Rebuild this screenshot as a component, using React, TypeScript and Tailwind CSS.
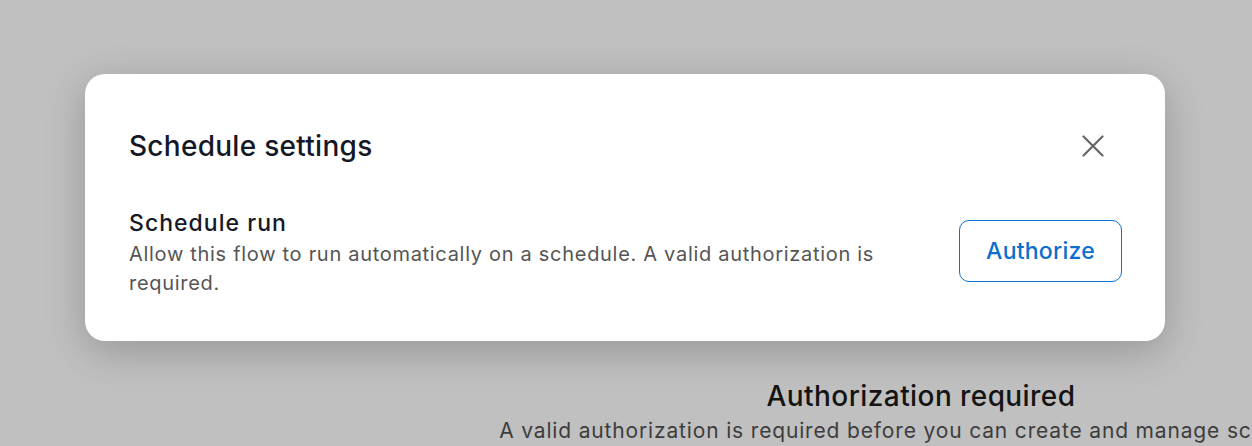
export default function App() {
  return (
    <div
      className="relative h-[446px] w-[1252px] overflow-hidden bg-[#c0c0c0]"
      style={{ fontFamily: "Inter, 'Noto Sans', sans-serif" }}
    >
      {/* page content behind the dialog */}
      <div className="flex w-full justify-center pl-[590px] pt-[377px]">
        <div className="flex w-[846px] shrink-0 flex-col items-center text-center">
          <h2 className="text-[28px] leading-[38px] font-medium tracking-[0.015em] text-[#141414]">
            Authorization required
          </h2>
          <p className="mt-[1px] whitespace-nowrap text-[21px] leading-[30px] tracking-[0.04em] text-[#3d3d3d]">
            A valid authorization is required before you can create and manage schedules.
          </p>
        </div>
      </div>

      {/* dialog */}
      <div className="absolute left-[85px] top-[74px] w-[1080px] rounded-[20px] bg-white pl-[44px] pr-[43px] pt-[54px] pb-[43px] shadow-[0_10px_40px_rgba(0,0,0,0.22)]">
        <div className="flex items-center justify-between">
          <h1 className="text-[28px] leading-[36px] font-medium tracking-[0.01em] text-[#151826]">
            Schedule settings
          </h1>
          <button className="mr-[18px] text-[#666666]">
            <svg width="22" height="22" viewBox="0 0 22 22" fill="none" stroke="currentColor" strokeWidth="2.2" strokeLinecap="round">
              <path d="M1.5 1.5l19 19M20.5 1.5l-19 19" />
            </svg>
          </button>
        </div>

        <div className="mt-[44px] flex items-center justify-between">
          <div className="w-[790px]">
            <div className="text-[23px] leading-[30px] font-medium tracking-[0.045em] text-[#151826]">Schedule run</div>
            <p className="mt-[2px] text-[20px] leading-[29px] tracking-[0.035em] text-[#555555]">
              Allow this flow to run automatically on a schedule. A valid authorization is required.
            </p>
          </div>
          <button className="mt-[-4px] h-[62px] w-[163px] rounded-[10px] border border-[#0a73d1] text-[23px] font-medium tracking-[0.01em] text-[#0a6fce]">
            Authorize
          </button>
        </div>
      </div>
    </div>
  )
}
